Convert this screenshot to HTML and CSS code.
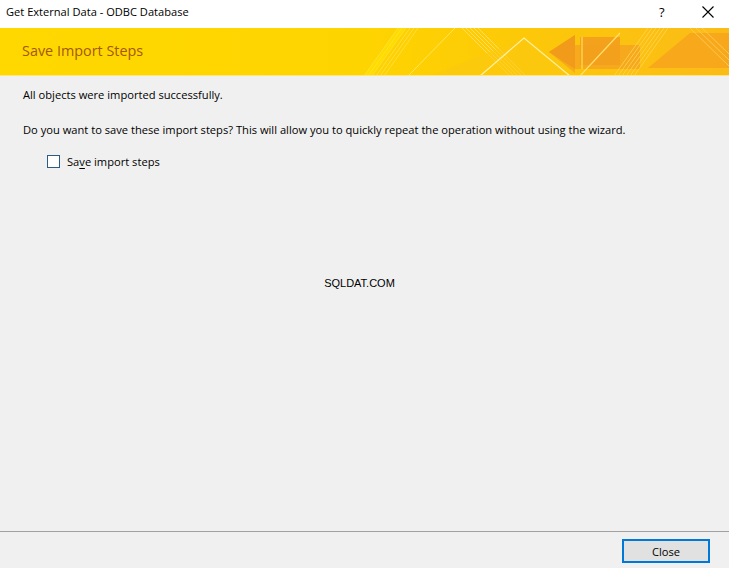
FILE: index.html
```html
<!DOCTYPE html>
<html>
<head>
<meta charset="utf-8">
<link rel="stylesheet" href="styles.css">
</head>
<body>
<div class="dialog">
  <div class="titlebar">
    <span class="title">Get External Data - ODBC Database</span>
    <span class="help">?</span>
    <span class="close-x">
      <svg width="12" height="12" viewBox="0 0 12 12"><path d="M0.5 0.5 L11.5 11.5 M11.5 0.5 L0.5 11.5" stroke="#000" stroke-width="1.1" fill="none"/></svg>
    </span>
  </div>
  <div class="banner">
    <svg class="banner-art" width="729" height="48" viewBox="0 0 729 48" preserveAspectRatio="none">
      <defs>
        <linearGradient id="bg" x1="0" y1="0" x2="1" y2="0">
          <stop offset="0" stop-color="#ffd800"/>
          <stop offset="0.5" stop-color="#fed400"/>
          <stop offset="0.75" stop-color="#fcc70a"/>
          <stop offset="1" stop-color="#fbbb18"/>
        </linearGradient>
      </defs>
      <rect x="0" y="0" width="729" height="48" fill="url(#bg)"/>
      <g stroke="#ffe25a" stroke-width="1" opacity="0.7">
        <line x1="364" y1="48" x2="398" y2="0"/>
        <line x1="368" y1="48" x2="402" y2="0"/>
        <line x1="372" y1="48" x2="406" y2="0"/>
        <line x1="376" y1="48" x2="410" y2="0"/>
        <line x1="380" y1="48" x2="414" y2="0"/>
        <line x1="384" y1="48" x2="418" y2="0"/>
      </g>
      <polygon points="364,48 372,48 406,0 398,0" fill="#ffe600" opacity="0.5"/>
      <line x1="408" y1="48" x2="455" y2="0" stroke="#ffe55a" stroke-width="1"/>
      <g stroke="#fde37a" stroke-width="1" opacity="0.75">
        <line x1="462" y1="0" x2="510" y2="48"/>
        <line x1="466" y1="0" x2="514" y2="48"/>
        <line x1="470" y1="0" x2="518" y2="48"/>
        <line x1="474" y1="0" x2="522" y2="48"/>
        <line x1="478" y1="0" x2="526" y2="48"/>
      </g>
      <polygon points="430,48 524,10 570,48" fill="#fbc810" opacity="0.6"/>
      <polyline points="480,48 524,10 570,48" fill="none" stroke="#fff0a0" stroke-width="1.2"/>
      <polygon points="549,24 575,7 575,17 640,17 640,41 575,41 575,45" fill="#f5a420" opacity="0.85"/>
      <polygon points="549,24 575,7 575,41" fill="#f29a1a"/>
      <rect x="580" y="9" width="40" height="28" fill="#f39e1e" opacity="0.9"/>
      <line x1="582" y1="9" x2="582" y2="41" stroke="#ffd24a" stroke-width="1.5"/>
      <line x1="580" y1="48" x2="620" y2="5" stroke="#ffe06a" stroke-width="1.2"/>
      <g stroke="#ffd75a" stroke-width="1" opacity="0.75">
        <line x1="614" y1="48" x2="648" y2="0"/>
        <line x1="618" y1="48" x2="652" y2="0"/>
        <line x1="622" y1="48" x2="656" y2="0"/>
        <line x1="626" y1="48" x2="660" y2="0"/>
        <line x1="630" y1="48" x2="664" y2="0"/>
        <line x1="634" y1="48" x2="668" y2="0"/>
      </g>
      <polygon points="648,40 690,5 729,5 729,40" fill="#f7a51c" opacity="0.9"/>
      <g stroke="#fcd060" stroke-width="1" opacity="0.8">
        <line x1="690" y1="0" x2="729" y2="38"/>
        <line x1="696" y1="0" x2="729" y2="32"/>
        <line x1="702" y1="0" x2="729" y2="26"/>
      </g>
      <line x1="0" y1="47.5" x2="729" y2="47.5" stroke="#ffe57a" stroke-width="1"/>
    </svg>
    <h1 class="banner-title">Save Import Steps</h1>
  </div>
  <div class="content">
    <p class="msg first">All objects were imported successfully.</p>
    <p class="msg">Do you want to save these import steps? This will allow you to quickly repeat the operation without using the wizard.</p>
    <label class="check">
      <span class="box"></span>
      <span class="check-label">Sa<u>v</u>e import steps</span>
    </label>
    <div class="watermark">SQLDAT.COM</div>
  </div>
  <div class="footer">
    <button class="btn">Close</button>
  </div>
</div>
</body>
</html>
```

FILE: styles.css
```css
html, body {
  margin: 0;
  padding: 0;
}
body {
  width: 729px;
  height: 568px;
  overflow: hidden;
  background: #f0f0f0;
  font-family: "Open Sans", "Noto Sans", sans-serif;
  font-size: 11.15px;
  color: #000;
}
.dialog {
  display: flex;
  flex-direction: column;
  height: 568px;
}
.titlebar {
  height: 28px;
  background: #fff;
  display: flex;
  align-items: center;
  padding-left: 6px;
  box-sizing: border-box;
}
.title {
  flex: 1;
  font-size: 11.1px;
  padding-bottom: 5px;
}
.help {
  width: 20px;
  font-size: 13px;
  margin-right: 23px;
  padding-bottom: 5px;
}
.close-x {
  width: 12px;
  height: 12px;
  margin-right: 15px;
  margin-bottom: 5px;
  display: flex;
}
.banner {
  position: relative;
  height: 48px;
  overflow: hidden;
}
.banner-art {
  position: absolute;
  left: 0;
  top: 0;
}
.banner-title {
  position: relative;
  margin: 0;
  padding: 13px 0 0 22px;
  font-weight: normal;
  font-size: 14.4px;
  color: #a3580a;
}
.content {
  flex: 1;
  padding: 11px 23px 0;
  position: relative;
}
.msg {
  margin: 0;
  line-height: 16px;
}
.msg.first {
  margin-bottom: 19px;
}
.check {
  display: flex;
  align-items: center;
  margin: 15px 0 0 24px;
  height: 16px;
}
.box {
  width: 11px;
  height: 11px;
  border: 1px solid #2a5c86;
  background: #fff;
  margin-right: 7px;
}
.check-label u {
  text-decoration-thickness: 1px;
  text-underline-offset: 2px;
}
.watermark {
  position: absolute;
  left: 0;
  right: 10px;
  top: 201px;
  text-align: center;
  font-family: "Liberation Sans", Arial, sans-serif;
  font-size: 11px;
}
.footer {
  height: 37px;
  border-top: 1px solid #a0a0a0;
  display: flex;
  justify-content: flex-end;
  align-items: flex-start;
  padding: 7px 19px 0 0;
  box-sizing: border-box;
  flex: none;
}
.btn {
  width: 88px;
  height: 24px;
  box-sizing: border-box;
  background: #e1e1e1;
  border: 2px solid #0078d7;
  font-family: "Open Sans", "Noto Sans", sans-serif;
  font-size: 11.15px;
  color: #000;
  padding: 0;
}
```
